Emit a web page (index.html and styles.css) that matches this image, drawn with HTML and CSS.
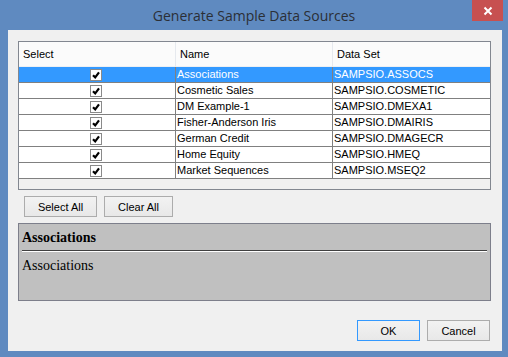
FILE: index.html
```html
<!DOCTYPE html>
<html lang="en">
<head>
    <meta charset="UTF-8">
    <meta name="viewport" content="width=device-width, initial-scale=1.0">
    <title>Generate Sample Data Sources</title>
    <link rel="stylesheet" href="styles.css">
</head>
<body>
    <div class="window">
        <div class="titlebar">
            <div></div>
            <div class="title">Generate Sample Data Sources</div>
            <button class="closebtn">
                <svg viewBox="0 0 10 10" width="10" height="10">
                    <path d="M1.5 1.5L8.5 8.5M8.5 1.5L1.5 8.5" stroke="#fff" stroke-width="2"/>
                </svg>
            </button>
        </div>
        <div class="client">
            <div class="grid">
                <div class="row head">
                    <div class="cell">Select</div>
                    <div class="cell">Name</div>
                    <div class="cell">Data Set</div>
                </div>
                <div class="row selected">
                    <div class="cell check"><span class="box"><svg viewBox="0 0 10 10"><path d="M2 5.2L4.2 7.4L8 2.4" /></svg></span></div>
                    <div class="cell">Associations</div>
                    <div class="cell">SAMPSIO.ASSOCS</div>
                </div>
                <div class="row">
                    <div class="cell check"><span class="box"><svg viewBox="0 0 10 10"><path d="M2 5.2L4.2 7.4L8 2.4" /></svg></span></div>
                    <div class="cell">Cosmetic Sales</div>
                    <div class="cell">SAMPSIO.COSMETIC</div>
                </div>
                <div class="row">
                    <div class="cell check"><span class="box"><svg viewBox="0 0 10 10"><path d="M2 5.2L4.2 7.4L8 2.4" /></svg></span></div>
                    <div class="cell">DM Example-1</div>
                    <div class="cell">SAMPSIO.DMEXA1</div>
                </div>
                <div class="row">
                    <div class="cell check"><span class="box"><svg viewBox="0 0 10 10"><path d="M2 5.2L4.2 7.4L8 2.4" /></svg></span></div>
                    <div class="cell">Fisher-Anderson Iris</div>
                    <div class="cell">SAMPSIO.DMAIRIS</div>
                </div>
                <div class="row">
                    <div class="cell check"><span class="box"><svg viewBox="0 0 10 10"><path d="M2 5.2L4.2 7.4L8 2.4" /></svg></span></div>
                    <div class="cell">German Credit</div>
                    <div class="cell">SAMPSIO.DMAGECR</div>
                </div>
                <div class="row">
                    <div class="cell check"><span class="box"><svg viewBox="0 0 10 10"><path d="M2 5.2L4.2 7.4L8 2.4" /></svg></span></div>
                    <div class="cell">Home Equity</div>
                    <div class="cell">SAMPSIO.HMEQ</div>
                </div>
                <div class="row">
                    <div class="cell check"><span class="box"><svg viewBox="0 0 10 10"><path d="M2 5.2L4.2 7.4L8 2.4" /></svg></span></div>
                    <div class="cell">Market Sequences</div>
                    <div class="cell">SAMPSIO.MSEQ2</div>
                </div>
            </div>
            <div class="tools">
                <button class="btn selectall">Select All</button>
                <button class="btn clearall">Clear All</button>
            </div>
            <div class="details">
                <div class="dtitle">Associations</div>
                <div class="dtext">Associations</div>
            </div>
            <div class="footer">
                <button class="btn okbtn">OK</button>
                <button class="btn">Cancel</button>
            </div>
        </div>
    </div>
</body>
</html>
```

FILE: styles.css
```css
body {
    margin: 0;
    background-color: #5f8ac0;
    font-family: 'Liberation Sans', Arial, sans-serif;
    font-size: 11px;
    color: #000;
}
.window {
    width: 508px;
    height: 357px;
    background-color: #5f8ac0;
}
.titlebar {
    height: 30px;
    display: grid;
    grid-template-columns: 1fr auto 1fr;
}
.title {
    font-family: 'Open Sans', sans-serif;
    font-size: 14px;
    color: #2b2f36;
    line-height: 30px;
    padding-top: 1px;
}
.closebtn {
    justify-self: end;
    width: 31px;
    height: 21px;
    margin-right: 5px;
    padding: 0;
    border: 0;
    background-color: #c75050;
    display: flex;
    align-items: center;
    justify-content: center;
}
.client {
    margin: 0 6px 0 8px;
    height: 321px;
    background-color: #f0f0f0;
    display: flex;
    flex-direction: column;
}
.grid {
    margin: 11px 0 0 10px;
    width: 473px;
    height: 149px;
    box-sizing: border-box;
    border: 1px solid #828790;
    background-color: #f0f0f0;
}
.row {
    display: grid;
    grid-template-columns: 157px 157px 157px;
    height: 16px;
    background-color: #fff;
}
.row .cell {
    box-sizing: border-box;
    border-right: 1px solid #808080;
    border-bottom: 1px solid #808080;
    padding-left: 1px;
    line-height: 15px;
    white-space: nowrap;
    overflow: hidden;
}
.row .cell:last-child {
    border-right: 0;
}
.row.head {
    height: 25px;
    background-color: #fbfbfb;
}
.row.head .cell {
    border-right: 1px solid #e6e9ee;
    border-bottom: 1px solid #eef0f3;
    line-height: 24px;
    padding-left: 4px;
}
.row.head .cell:last-child {
    border-right: 0;
}
.row.selected {
    background-color: #3399ff;
    color: #fff;
}
.cell.check {
    display: flex;
    justify-content: center;
    align-items: center;
    padding-left: 0;
    padding-right: 2px;
}
.box {
    width: 12px;
    height: 12px;
    box-sizing: border-box;
    border: 1px solid #8a8a8a;
    background-color: #fff;
    display: block;
}
.box svg {
    display: block;
    width: 10px;
    height: 10px;
}
.box path {
    fill: none;
    stroke: #000;
    stroke-width: 2.2;
}
.btn {
    font-family: 'Liberation Sans', Arial, sans-serif;
    font-size: 11px;
    color: #000;
    height: 21px;
    padding: 0;
    border: 1px solid #acacac;
    background: linear-gradient(#f2f2f2, #e8e8e8);
}
.tools {
    display: flex;
    gap: 7px;
    margin: 6px 0 0 16px;
}
.selectall {
    width: 73px;
}
.clearall {
    width: 69px;
}
.details {
    margin: 6px 0 0 10px;
    width: 473px;
    height: 78px;
    box-sizing: border-box;
    border: 1px solid #7d7f8b;
    background-color: #c0c0c0;
    padding: 6px 3px 0 3px;
    font-family: 'Liberation Serif', 'Times New Roman', serif;
    font-size: 14px;
}
.dtitle {
    font-weight: bold;
    line-height: 16px;
    padding-bottom: 4px;
    border-bottom: 1px solid #404040;
    box-shadow: 0 1px 0 #fff;
}
.dtext {
    line-height: 16px;
    margin-top: 7px;
}
.footer {
    display: flex;
    justify-content: flex-end;
    gap: 7px;
    margin: 19px 12px 0 0;
}
.footer .btn {
    width: 63px;
}
.okbtn {
    border-color: #3399ff;
}
```
